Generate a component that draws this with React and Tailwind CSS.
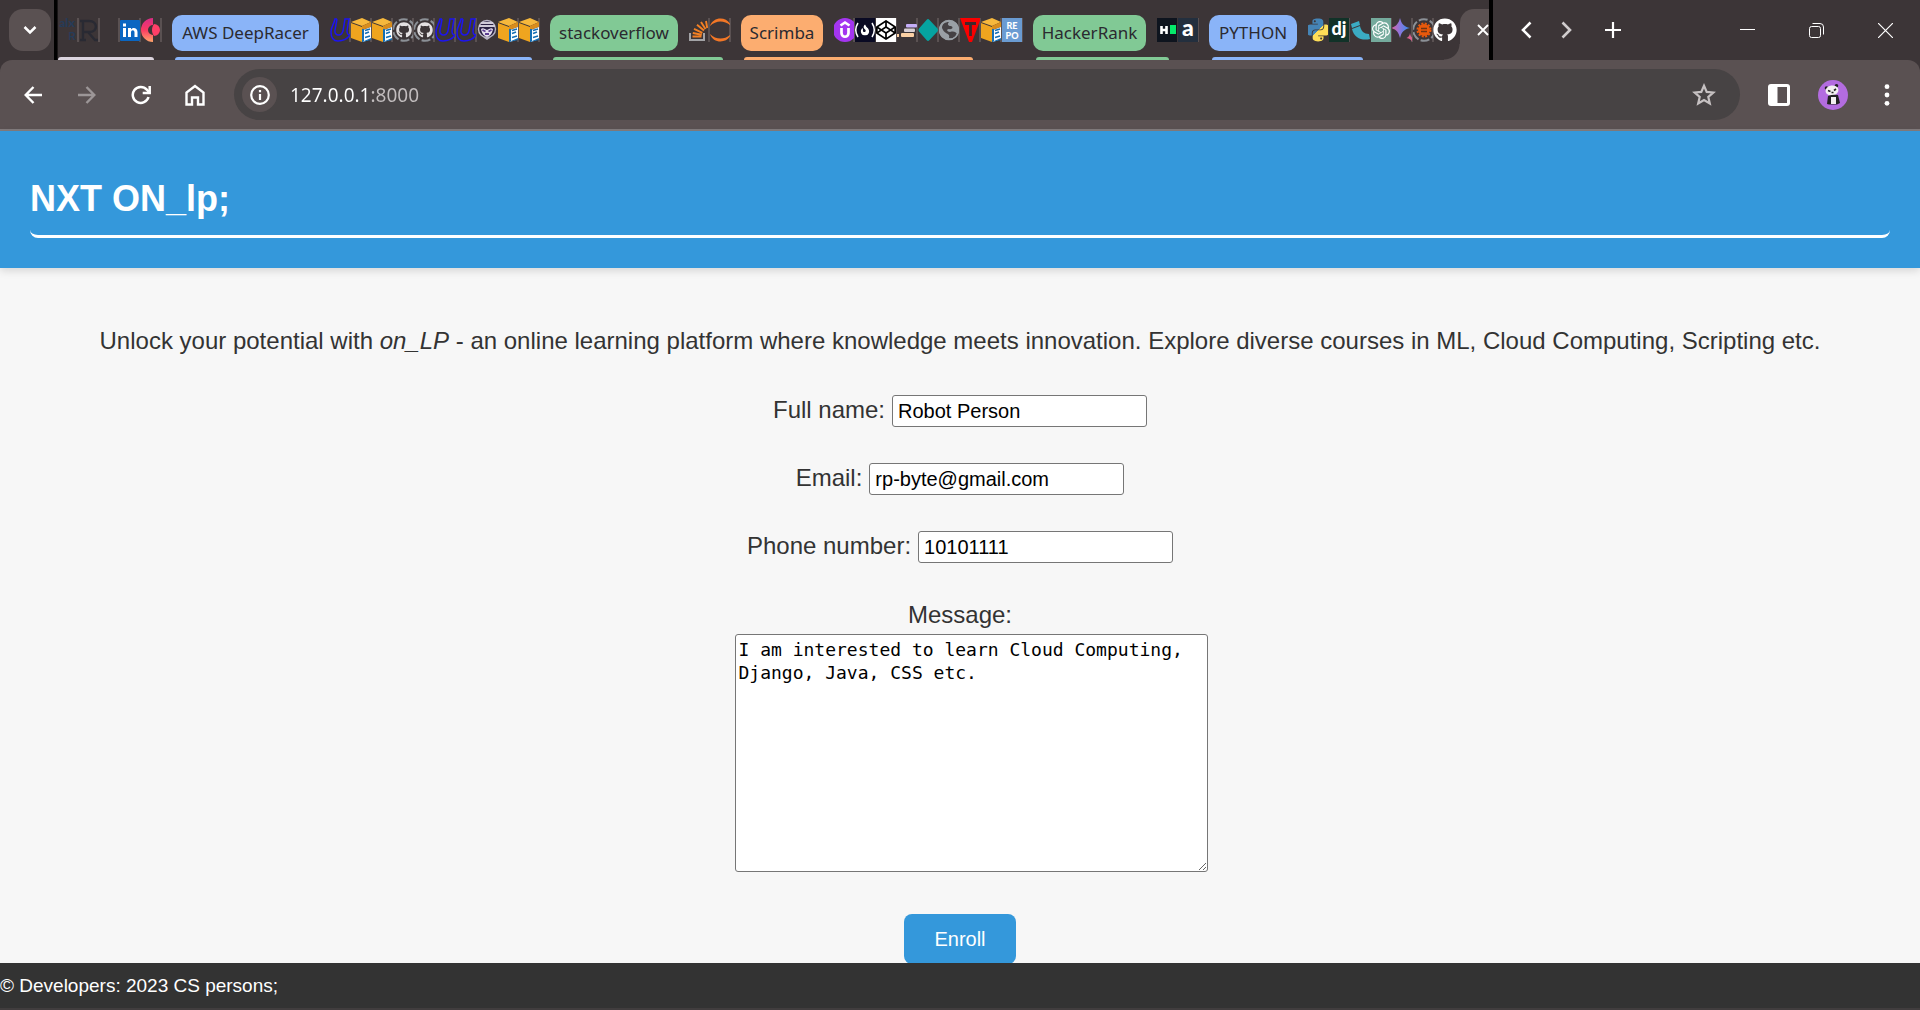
import React from "react";
import { FaPython, FaStackOverflow, FaGithub, FaCodepen, FaFire } from "react-icons/fa";
import { SiOpenai } from "react-icons/si";

const Fav = ({ children, edge = true }) => (
  <span className={edge ? "block h-6 w-[21px] shrink-0 border-r-2 border-[#5a5152]" : "block h-6 w-[21px] shrink-0"}>
    <svg viewBox="0 0 20 24" className="h-6 w-5" fill="none" aria-hidden="true">
      {children}
    </svg>
  </span>
);

const T = ({ x = 10, y, size, fill = "#fff", font = "Lato", weight = 700, children }) => (
  <text x={x} y={y} fontSize={size} fill={fill} fontFamily={font + ", sans-serif"} fontWeight={weight} textAnchor="middle">
    {children}
  </text>
);

const Alx = () => (
  <Fav>
    <T x={9} y={9} size={12} fill="#263b58" weight={900}>alx</T>
    <T x={14} y={22} size={10} fill="#263b58" font="Liberation Sans" weight={700}>R</T>
  </Fav>
);
const BigR = () => (
  <Fav>
    <path d="M1 3h9c9 0 9 11 1 11H4M4 3v19M1 22h6M9 14l7 8h3" stroke="#292a33" strokeWidth="2.4" />
  </Fav>
);
const LinkedIn = () => (
  <Fav>
    <rect y="2" width="20" height="21" rx="1" fill="#0a66c2" />
    <path d="M3 10h3v9H3zM3 5.500h3v3H3zM8 10h3v1.500c1-2.300 6.500-2.500 6.500 2.500v5h-3v-4.500c0-3-3.500-3-3.500 0V19H8z" fill="#fff" />
  </Fav>
);
const PinkC = () => (
  <Fav>
    <defs>
      <linearGradient id="pinkc" x1="0" y1="0" x2="0" y2="1">
        <stop offset="0" stopColor="#d92c86" />
        <stop offset=".5" stopColor="#fb3b63" />
        <stop offset="1" stopColor="#ffa56b" />
      </linearGradient>
    </defs>
    <path d="M12 0a12 12 0 0 0 0 24v-7a5 5 0 0 1 0-10z" fill="url(#pinkc)" />
    <path d="M13 6a6 6 0 0 1 0 12c-1.500-2-2-4-2-6s.5-4 2-6z" fill="#ff3f68" />
  </Fav>
);
const BlueU = () => (
  <Fav>
    <path d="M7 1H5C4 6 1 9 1 14c0 6 3 9 7 9 6 0 10-3 12-6M7 1 5 12c-1 6 6 7 8 1L15 1h4l-2 12c0 3 1 4 3 4" stroke="#1d14f0" strokeWidth="1.500" />
  </Fav>
);
const Box = () => (
  <Fav>
    <path d="M0 4 11 0l9 4-9 4z" fill="#f6b83c" />
    <path d="M0 5l11 4v15L0 20z" fill="#efa51f" />
    <path d="M11 8l9-4v5l-9 3z" fill="#d98d1c" />
    <path d="M12 12l8-3v12l-8 3z" fill="#fff" />
    <path d="M11 11h2v12l7-3v2l-9 2z" fill="#146eb4" />
    <path d="M14 12.500l5-1.500M14 15.500l4-1.500M14 19.500l5-1.500" stroke="#146eb4" strokeWidth="1.600" />
  </Fav>
);
const Ring = ({ children }) => (
  <>
    <circle cx="11" cy="12" r="10.800" stroke="#8b9096" strokeWidth="2" strokeDasharray="9 2.300" />
    {children}
  </>
);
const GitRing = () => (
  <Fav>
    <Ring><FaGithub x={3} y={4} size={16} fill="#e4e1e2" /></Ring>
  </Fav>
);
const Ghost = () => (
  <Fav edge={false}>
    <circle cx="10" cy="11" r="8.500" fill="#2a2144" stroke="#b8b4c4" strokeWidth="1.400" />
    <path d="M2 8h16M4 5h12" stroke="#cfcad8" strokeWidth="2" />
    <path d="M4 11c2-2 4 0 6 1 2-1 4-3 6-1-1 5-3 7-6 8-3-1-5-3-6-8z" fill="#e6e0ef" />
    <path d="M5.500 12l3 1.500M14.500 12l-3 1.500M8 16h4" stroke="#5d3e92" strokeWidth="1.800" />
    <path d="M7 20h6l-3 2z" fill="#b8b4c4" />
  </Fav>
);
const Stack = () => (
  <Fav>
    <path d="M1 15v7h14v-7" stroke="#a3a3a6" strokeWidth="2" />
    <path d="M3.500 18.500h9M3.800 15l9 1.800M5 10.800l8.400 4M8 6.800l7 5.800M12 4l4.500 7M17 3l1.200 7" stroke="#f48024" strokeWidth="1.900" />
  </Fav>
);
const Jupyter = () => (
  <Fav>
    <path d="M0 8C3-2 18-2 21 8 15 2 6 2 0 8zM0 16c3 10 18 10 21 0-6 6-15 6-21 0z" fill="#f37726" />
  </Fav>
);
const Udemy = () => (
  <Fav>
    <circle cx="11" cy="12" r="12" fill="#a435f0" />
    <path d="M6.500 7.500l4.500-3 4.500 3M7.500 10v5c0 5 7 5 7 0v-5" stroke="#fff" strokeWidth="2.700" />
  </Fav>
);
const Fcc = () => (
  <Fav edge={false}>
    <rect width="20" height="24" fill="#0a0a23" />
    <FaFire x={4.500} y={6.500} size={11} fill="#fff" />
    <path d="M3 5Q-1.500 12 3 19M17 5q4.500 7 0 14" stroke="#fff" strokeWidth="1.500" />
  </Fav>
);
const Codepen = () => (
  <Fav>
    <rect width="20" height="24" fill="#fff" />
    <FaCodepen x={0} y={2} size={20} fill="#000" />
  </Fav>
);
const ScrimbaIcon = () => (
  <Fav>
    <rect x="9" y="6" width="11" height="3.500" rx="1" fill="#c5aef8" />
    <rect x="7" y="10.500" width="11" height="3.500" rx="1" fill="#d8cfd3" />
    <rect x="4" y="15" width="13" height="4" rx="1" fill="#fbd0a4" />
    <rect y="16" width="2" height="3" fill="#fbd0a4" />
  </Fav>
);
const Diamond = () => (
  <Fav>
    <path d="M8.500 2q1.500-2 3 0l8 8.500q1 1.500 0 3l-8 8.500q-1.500 2-3 0L1 13.500q-1-1.500 0-3z" fill="#06a3a0" />
  </Fav>
);
const Globe = () => (
  <Fav>
    <circle cx="10" cy="12" r="10" fill="#9aa0a6" />
    <path d="M10 4c-2 2-1 4 2 4 3 1 1 4-2 3-3 0-2 3 1 3 4-1 6 0 7 2-2 4-5 5-8 4 1-3-1-4-3-5-2-1-3-3-4-5 0-4 3-6 7-6z" fill="#454144" />
    <circle cx="10" cy="12" r="9.500" stroke="#9aa0a6" strokeWidth="1.500" />
  </Fav>
);
const RedT = () => (
  <Fav>
    <path d="M0 0h21L12 24h-3z" fill="#fb0000" />
    <path d="M5 5.500h11M10.500 5v13" stroke="#40272b" strokeWidth="2.800" />
  </Fav>
);
const Repo = () => (
  <Fav>
    <rect width="20" height="24" fill="#6a9bd2" />
    <T y={11} size={9} weight={900}>RE</T>
    <T y={21} size={9} weight={900}>PO</T>
  </Fav>
);
const HR = () => (
  <Fav edge={false}>
    <rect width="20" height="24" fill="#0e141e" />
    <path d="M4.500 8v8M9.500 8v8M4 12h6" stroke="#fff" strokeWidth="2.600" />
    <rect x="13" y="7" width="6" height="9" fill="#05e86a" />
  </Fav>
);
const Amazon = () => (
  <Fav>
    <rect width="20" height="24" fill="#232f3e" />
    <T y={18} size={23} font="Lato" weight={900}>a</T>
  </Fav>
);
const Python = () => (
  <Fav edge={false}>
    <defs>
      <linearGradient id="py" x1="0" y1="0" x2="1" y2="1">
        <stop offset=".5" stopColor="#4584b6" />
        <stop offset=".5" stopColor="#ffde57" />
      </linearGradient>
    </defs>
    <FaPython x={-3} y={-1} size={26} fill="url(#py)" />
  </Fav>
);
const Django = () => (
  <Fav>
    <rect width="20" height="24" fill="#113228" />
    <T y={17} size={18} font="Lato" weight={900}>dj</T>
  </Fav>
);
const Flask = () => (
  <Fav edge={false}>
    <path d="M1 6l8-3 1 4-8 3zM2 11l8-3c1 5 4 8 9 8l1 5c-8 2-16-1-18-10z" fill="#3babc3" />
  </Fav>
);
const Gpt = () => (
  <Fav>
    <rect width="20" height="24" fill="#74aa9c" />
    <SiOpenai x={1} y={3} size={18} fill="#fff" />
  </Fav>
);
const Spark = () => (
  <Fav>
    <defs>
      <linearGradient id="sp" x1="0" y1="0" x2="1" y2="0">
        <stop offset="0" stopColor="#e0629a" />
        <stop offset=".45" stopColor="#8f76dc" />
        <stop offset="1" stopColor="#2f8df0" />
      </linearGradient>
    </defs>
    <path d="M8 0c1.500 6 4 8.500 10 10-6 1.500-8.500 4-10 10C6.500 14 4 11.500-1 10 4 8.500 6.500 6 8 0z" fill="url(#sp)" />
    <path d="M18 15c.5 3 1.500 4 2 4.500v4c-1-2-2.500-3-5.500-3.500 2-1 3-2 3.500-5z" fill="#d8618c" />
  </Fav>
);
const GearRing = () => (
  <Fav>
    <Ring>
      <circle cx="11" cy="12" r="6" fill="#e8590c" />
      <circle cx="11" cy="12" r="6.500" stroke="#e8590c" strokeWidth="2" strokeDasharray="2 1.400" />
      <path d="M8 10.500h6M8 13.500h6" stroke="#6f3413" strokeWidth="1.400" />
    </Ring>
  </Fav>
);
const Github = () => (
  <span className="block h-6 w-[21px] shrink-0">
    <FaGithub size={24} className="-ml-px text-white" aria-hidden="true" />
  </span>
);

const Chip = ({ className, children }) => (
  <button className={"mr-[11px] h-9 shrink-0 rounded-[10px] text-center font-['Noto_Sans',sans-serif] text-[17px] leading-6 text-[#2b2a30] " + className}>
    {children}
  </button>
);

const Group = ({ chip, bar, children }) => (
  <div className="flex h-[60px] shrink-0 flex-col justify-between">
    <div className="flex h-[51px] items-center pt-[15px]">
      {chip}
      <div className="-mt-[6px] flex h-6">{children}</div>
    </div>
    <div className={"h-[3px] rounded-t-sm " + bar} />
  </div>
);

const IconButton = ({ label, className = "w-[54px]", children }) => (
  <button aria-label={label} className={"flex h-full shrink-0 items-center justify-center text-white " + className}>
    {children}
  </button>
);

const TabStrip = () => (
  <div className="flex h-[60px] items-center overflow-hidden bg-[#3c3537]">
    <button aria-label="Search tabs" className="ml-[9px] flex h-[42px] w-[42px] shrink-0 items-center justify-center rounded-[14px] bg-[#5a5152] text-white">
      <svg width="14" height="10" viewBox="0 0 14 10" fill="none" stroke="currentColor" strokeWidth="2.500"><path d="M1.500 2 7 7.500 12.500 2" /></svg>
    </button>
    <div className="ml-[3px] h-full w-1 shrink-0 bg-gradient-to-r from-black via-black to-[#2a2526]" />
    <div className="flex flex-1 gap-[10px]">
      <Group bar="mr-2 bg-[#dcd5df]">
        <Alx /><BigR />
        <span className="w-5 border-r-2 border-[#5a5152]" />
        <LinkedIn /><PinkC />
      </Group>
      <Group chip={<Chip className="w-[147px] bg-[#8ab4f8]">AWS DeepRacer</Chip>} bar="ml-[3px] mr-2 bg-[#8ab4f8]">
        <BlueU /><Box /><Box /><GitRing /><GitRing /><BlueU /><BlueU /><Ghost /><Box /><Box />
      </Group>
      <Group chip={<Chip className="w-32 bg-[#81c995]">stackoverflow</Chip>} bar="ml-[3px] mr-2 bg-[#81c995]">
        <Stack /><Jupyter />
      </Group>
      <Group chip={<Chip className="w-[82px] bg-[#fcad70]">Scrimba</Chip>} bar="ml-[3px] mr-[50px] bg-[#fcad70]">
        <Udemy /><Fcc /><Codepen /><ScrimbaIcon /><Diamond /><Globe /><RedT /><Box /><Repo />
      </Group>
      <Group chip={<Chip className="w-[113px] bg-[#81c995]">HackerRank</Chip>} bar="ml-[3px] mr-[30px] bg-[#81c995]">
        <HR /><Amazon />
      </Group>
      <Group chip={<Chip className="w-[88px] bg-[#8ab4f8]">PYTHON</Chip>} bar="ml-[3px] mr-[92px] bg-[#8ab4f8]">
        <Python /><Django /><Flask /><Gpt /><Spark /><GearRing /><Github />
      </Group>
    </div>
    <div className="relative flex h-[51px] w-[29px] shrink-0 items-center self-end rounded-tl-[14px] bg-[#5a5152]">
      <span className="absolute -left-4 bottom-0 h-4 w-4 bg-[radial-gradient(circle_at_0_0,transparent_15px,#5a5152_16px)]" />
      <button aria-label="Close tab" className="mb-[9px] ml-[17px] text-white">
        <svg width="12" height="12" viewBox="0 0 12 12" stroke="currentColor" strokeWidth="1.900"><path d="M1 1l10 10M11 1 1 11" /></svg>
      </button>
    </div>
    <div className="h-full w-1 shrink-0 bg-black" />
    <div className="ml-3 flex h-full shrink-0">
      <IconButton label="Scroll tabs left" className="w-[41px]">
        <svg width="12" height="18" viewBox="0 0 12 18" fill="none" stroke="currentColor" strokeWidth="2.600"><path d="M10.500 1.500 3 9l7.500 7.500" /></svg>
      </IconButton>
      <IconButton label="Scroll tabs right" className="w-[41px]">
        <svg width="12" height="18" viewBox="0 0 12 18" fill="none" stroke="#d0cccd" strokeWidth="2.600"><path d="M1.500 1.500 9 9l-7.500 7.500" /></svg>
      </IconButton>
      <IconButton label="New tab" className="w-[51px]">
        <svg width="16" height="16" viewBox="0 0 16 16" stroke="currentColor" strokeWidth="2.200"><path d="M8 0v16M0 8h16" /></svg>
      </IconButton>
    </div>
    <div className="ml-[75px] flex h-full shrink-0">
      <IconButton label="Minimize" className="w-[69px]">
        <svg width="15" height="15" viewBox="0 0 15 15" stroke="currentColor"><path d="M0 6.500h15" /></svg>
      </IconButton>
      <IconButton label="Restore" className="w-[69px]">
        <svg width="15" height="15" viewBox="0 0 15 15" fill="none" stroke="currentColor"><rect x=".5" y="3.500" width="11" height="11" rx="2" /><path d="M3.500.5H11Q14.500.5 14.500 4v7.500" /></svg>
      </IconButton>
      <IconButton label="Close" className="w-[69px]">
        <svg width="15" height="15" viewBox="0 0 15 15" stroke="currentColor" strokeWidth="1.200"><path d="M0 0l15 15M15 0 0 15" /></svg>
      </IconButton>
    </div>
  </div>
);

const Toolbar = () => (
  <div className="bg-[#3c3537]">
    <div className="flex h-[71px] items-center rounded-t-[12px] border-b-2 border-[#827b7c] bg-[#5a5152] px-[6px]">
      <IconButton label="Back">
        <svg width="18" height="18" viewBox="0 0 18 18" fill="none" stroke="currentColor" strokeWidth="2.400"><path d="M18 9H2M9.500 1 1.700 9l7.800 8" /></svg>
      </IconButton>
      <IconButton label="Forward">
        <svg width="18" height="18" viewBox="0 0 18 18" fill="none" stroke="#9c9697" strokeWidth="2.400"><path d="M0 9h16M8.500 1l7.800 8-7.800 8" /></svg>
      </IconButton>
      <IconButton label="Reload">
        <svg width="20" height="20" viewBox="0 0 20 20" fill="none" stroke="currentColor" strokeWidth="2.500"><path d="M17.500 12a8 8 0 1 1-1.700-7.400L18 7" /><path d="M18.700 1v7h-7" /></svg>
      </IconButton>
      <IconButton label="Home">
        <svg width="20" height="22" viewBox="0 0 20 22" fill="none" stroke="currentColor" strokeWidth="2.400"><path d="M1.500 20.500V8.500L10 2l8.500 6.500v12h-5.500v-7H7v7z" /></svg>
      </IconButton>
      <div className="ml-3 flex h-[51px] flex-1 items-center rounded-full bg-[#474344] pl-2">
        <button aria-label="Site information" className="flex h-[35px] w-[35px] shrink-0 items-center justify-center rounded-full bg-[#5a5152] text-white">
          <svg width="20" height="20" viewBox="0 0 20 20" fill="none" stroke="currentColor" strokeWidth="2.200"><circle cx="10" cy="10" r="8.800" /><path d="M10 9v6M10 5v2.200" /></svg>
        </button>
        <input
          aria-label="Address"
          defaultValue="127.0.0.1:8000"
          className="ml-[13px] h-8 min-w-0 flex-1 bg-[linear-gradient(90deg,#ffffff_82px,#c3bebf_82px)] bg-clip-text font-['Noto_Sans',sans-serif] text-[19px] text-transparent outline-none"
        />
        <IconButton label="Bookmark" className="w-[72px]">
          <svg width="24" height="24" viewBox="0 0 24 24" fill="none" stroke="#c6c1c2" strokeWidth="2.200"><path d="M12 2.800l2.700 6.100 6.600.6-5 4.400 1.500 6.500-5.800-3.400-5.800 3.400 1.500-6.500-5-4.400 6.600-.6z" /></svg>
        </IconButton>
      </div>
      <div className="ml-3 flex h-full shrink-0">
        <IconButton label="Side panel">
          <svg width="22" height="22" viewBox="0 0 22 22"><rect width="22" height="22" rx="3" fill="#fff" /><rect x="9.500" y="3" width="9.500" height="16" fill="#5a5152" /></svg>
        </IconButton>
        <IconButton label="Profile">
          <svg width="30" height="30" viewBox="0 0 30 30">
            <circle cx="15" cy="15" r="15" fill="#b36ce0" />
            <circle cx="8.500" cy="8" r="1.800" fill="#222" /><circle cx="18.500" cy="5.800" r="1.800" fill="#222" />
            <ellipse cx="14" cy="10.500" rx="6.500" ry="5" fill="#f3f0f1" transform="rotate(-10 14 10.500)" />
            <path d="M10 10.500l2.500 1M18 9l-2 1.500M13.500 12.500h2" stroke="#222" strokeWidth="1.600" />
            <path d="M10 16q5-2 10-1l2 8-3 1.500h-8L9 24z" fill="#222" />
            <path d="M13 17h5v7h-5z" fill="#f3f0f1" />
          </svg>
        </IconButton>
        <IconButton label="Menu">
          <svg width="6" height="22" viewBox="0 0 6 22" fill="currentColor"><circle cx="3" cy="2.700" r="2.400" /><circle cx="3" cy="11" r="2.400" /><circle cx="3" cy="19.300" r="2.400" /></svg>
        </IconButton>
      </div>
    </div>
  </div>
);

const Field = ({ id, label, type, value }) => (
  <div className="flex h-8 justify-center gap-[7px]">
    <label htmlFor={id} className="leading-[30px]">{label}</label>
    <input
      id={id}
      type={type}
      defaultValue={value}
      className="h-8 w-[255px] rounded-[3px] border border-[#767676] bg-white px-[5px] text-xl text-black"
    />
  </div>
);

export default function App() {
  return (
    <div className="flex h-screen flex-col bg-[#f7f7f7] font-['Liberation_Sans',Arial,sans-serif] text-2xl text-[#333333]">
      <TabStrip />
      <Toolbar />
      <header className="z-10 bg-[#3498db] p-[30px] shadow-[0_3px_8px_rgba(0,0,0,0.13)]">
        <h1 className="rounded-b-[8px] border-b-[3px] border-white pt-4 pb-[14px] text-4xl leading-[44px] font-bold text-white">NXT ON_lp;</h1>
      </header>
      <main className="min-h-0 flex-1 overflow-hidden pt-[57px]">
        <p className="mb-[38px] text-center leading-8">
          Unlock your potential with <em>on_LP</em> - an online learning platform where knowledge meets innovation. Explore diverse courses in ML, Cloud Computing, Scripting etc.
        </p>
        <form className="flex flex-col items-center gap-9">
          <Field id="name" label="Full name:" type="text" value="Robot Person" />
          <Field id="email" label="Email:" type="email" value="rp-byte@gmail.com" />
          <Field id="phone" label="Phone number:" type="tel" value="10101111" />
          <div className="flex flex-col items-center gap-[3px]">
            <label htmlFor="message" className="leading-8">Message:</label>
            <textarea
              id="message"
              defaultValue="I am interested to learn Cloud Computing, Django, Java, CSS etc."
              className="ml-[22px] h-[238px] w-[473px] rounded-[3px] border border-[#767676] bg-white px-[3px] py-[3px] font-['DejaVu_Sans_Mono',monospace] text-lg leading-[23px] text-black"
            />
          </div>
          <button type="submit" className="mt-[6px] h-[50px] shrink-0 rounded-[8px] bg-[#3498db] px-[30px] text-xl text-white">Enroll</button>
        </form>
      </main>
      <footer className="z-10 border-b-2 border-[#413d3e] bg-[#333333] text-[19px] leading-[45px] text-white">© Developers: 2023 CS persons;</footer>
    </div>
  );
}
